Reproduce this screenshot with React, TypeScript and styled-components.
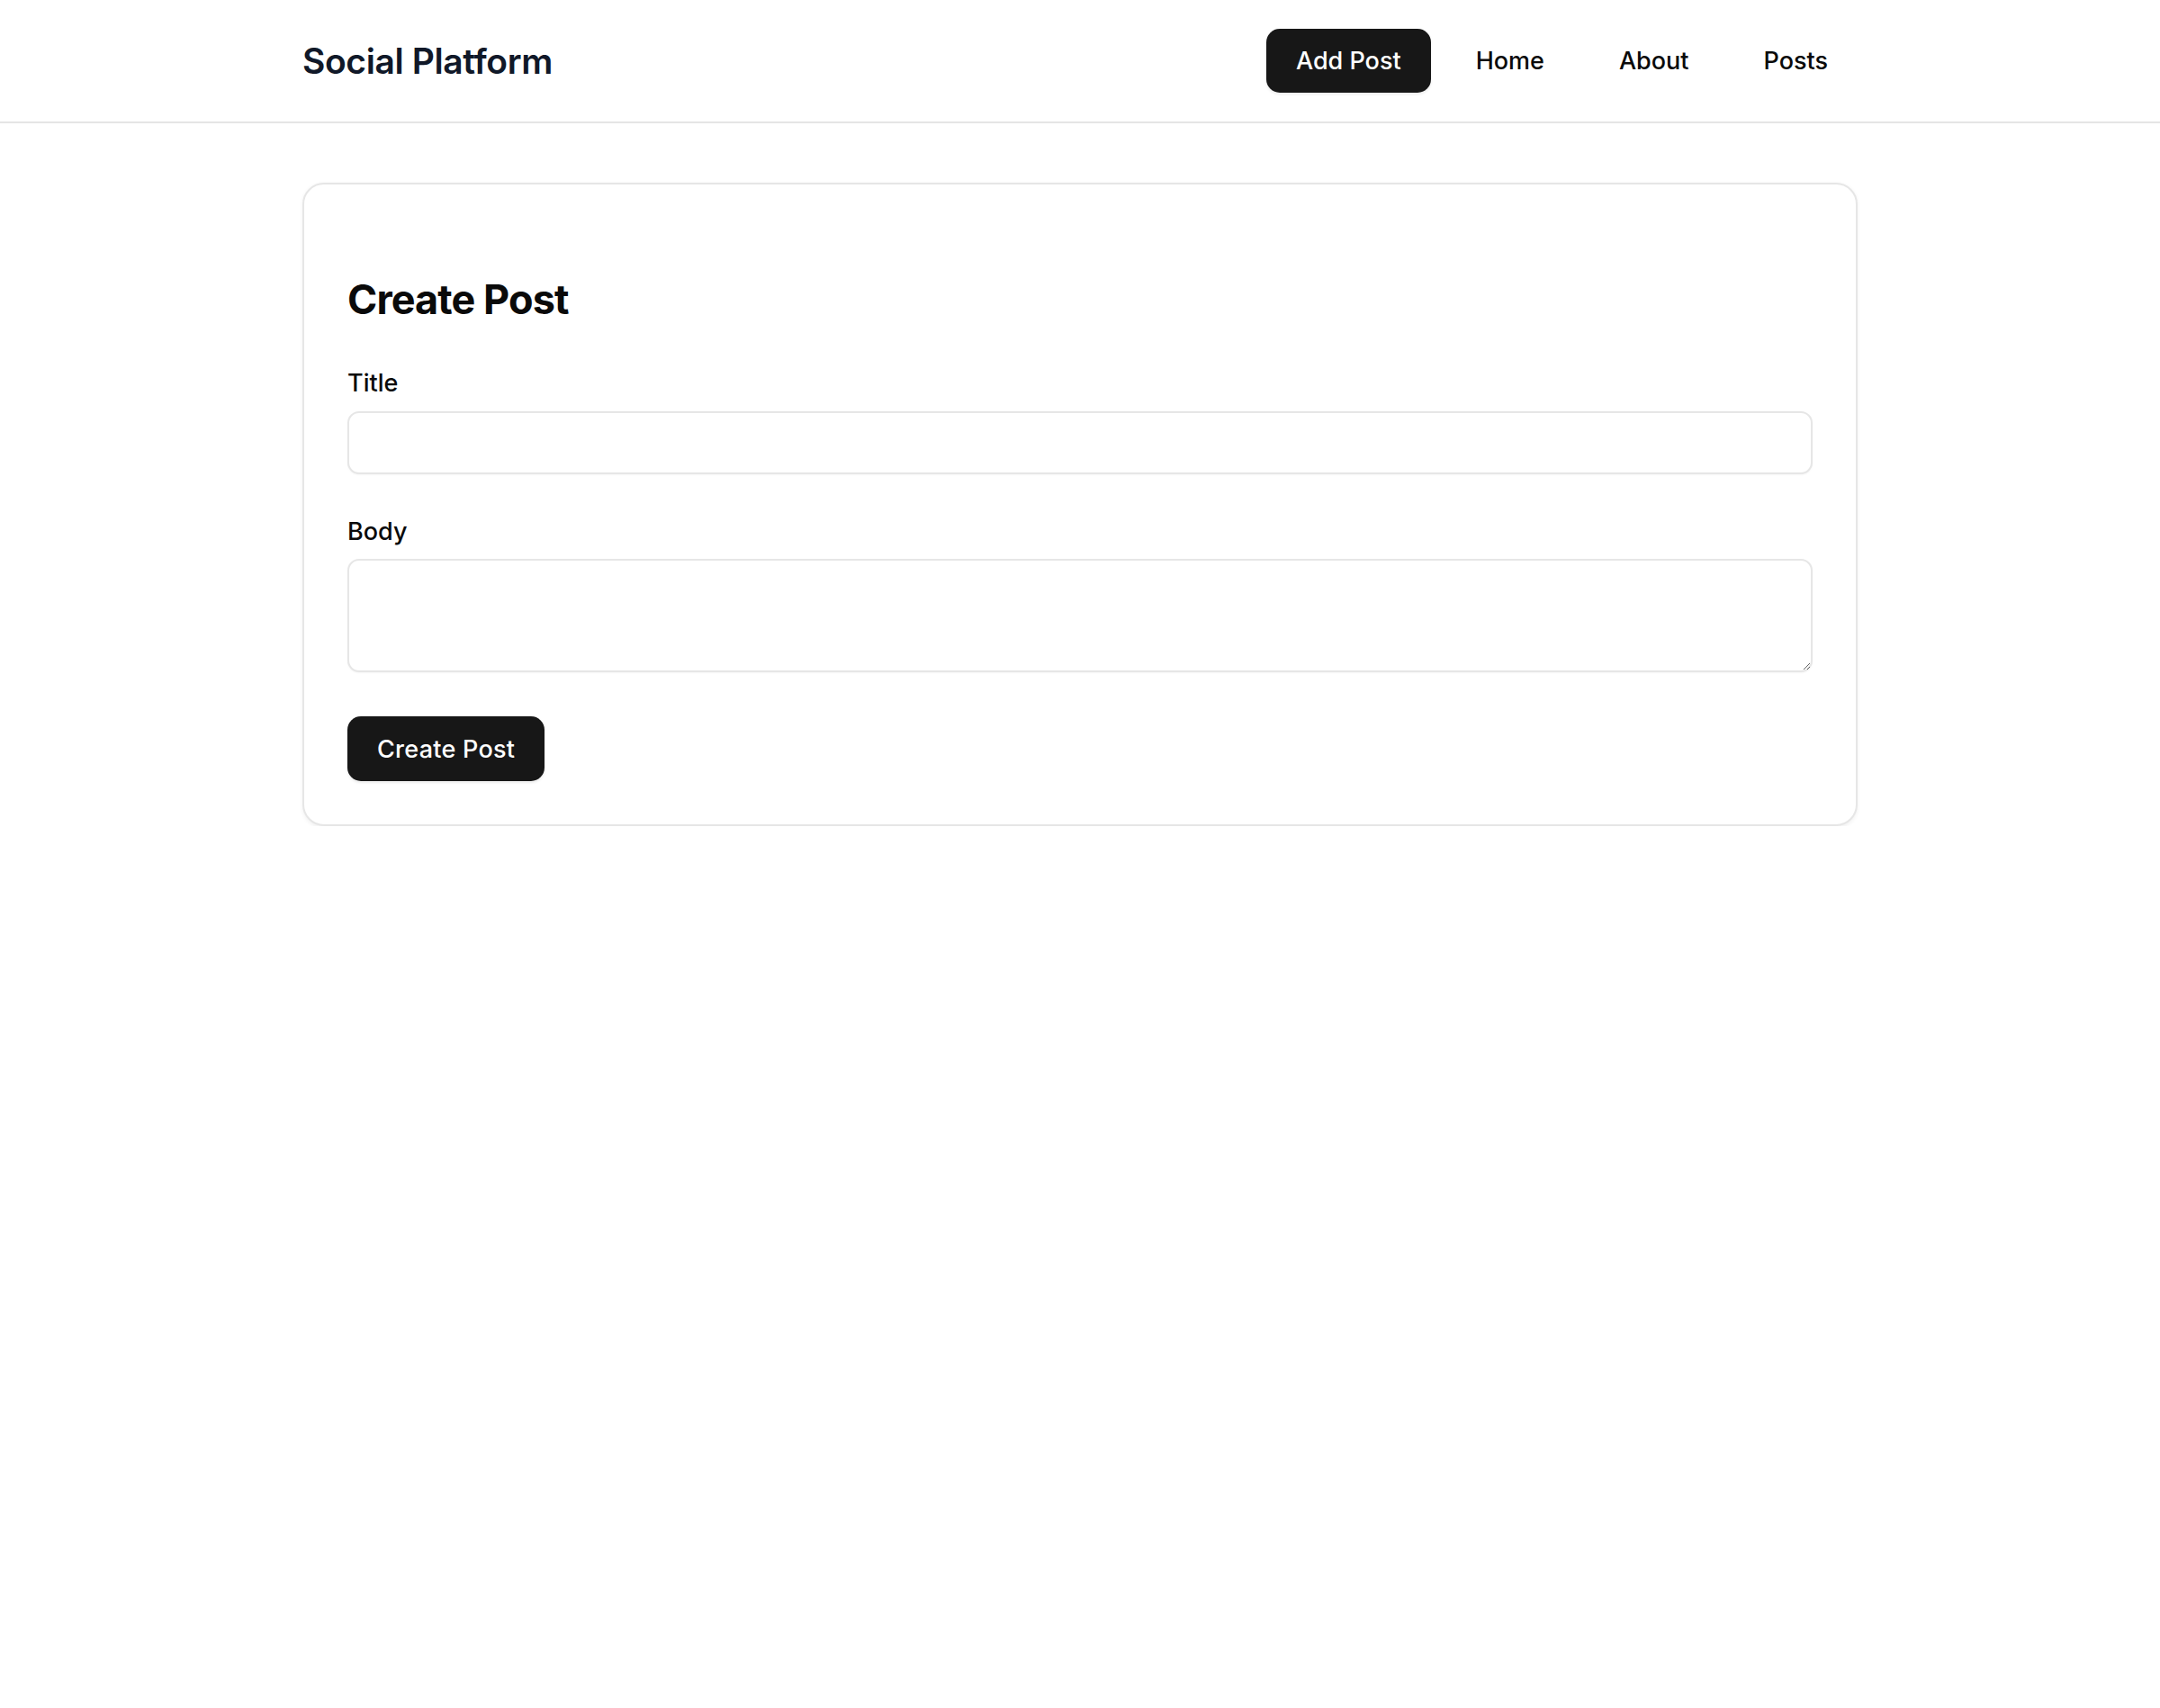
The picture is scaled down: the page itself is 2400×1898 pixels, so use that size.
import React from "react";
import styled, { createGlobalStyle } from "styled-components";

const GlobalStyle = createGlobalStyle`
  *, *::before, *::after { box-sizing: border-box; }
  html, body { margin: 0; padding: 0; background: #ffffff; }
  body {
    font-family: Inter, "Noto Sans", "Liberation Sans", sans-serif;
    color: #0a0a0a;
    -webkit-font-smoothing: antialiased;
  }
`;

const Header = styled.header`
  border-bottom: 2px solid #e5e5e5;
  background: #ffffff;
`;

const HeaderInner = styled.div`
  max-width: 1728px;
  margin: 0 auto;
  height: 135px;
  display: flex;
  align-items: center;
  justify-content: space-between;
`;

const Logo = styled.a`
  font-size: 39px;
  font-weight: 600;
  color: #101828;
  text-decoration: none;
  letter-spacing: -0.01em;
`;

const Nav = styled.nav`
  display: flex;
  align-items: center;
  gap: 17px;
`;

const NavLink = styled.a<{ $active?: boolean }>`
  display: inline-flex;
  align-items: center;
  height: 71px;
  padding: 0 33px;
  border-radius: 15px;
  font-size: 27px;
  font-weight: 500;
  text-decoration: none;
  color: ${(p) => (p.$active ? "#ffffff" : "#0a0a0a")};
  background: ${(p) => (p.$active ? "#171717" : "transparent")};
  box-shadow: ${(p) => (p.$active ? "0 1.5px 3px rgba(0,0,0,0.08)" : "none")};
`;

const Main = styled.main`
  max-width: 1728px;
  margin: 0 auto;
  padding-top: 66px;
`;

const Card = styled.section`
  border: 2px solid #e6e6e6;
  border-radius: 24px;
  padding: 101px 48px 48px;
  background: #ffffff;
  box-shadow: 0 1.5px 4px rgba(0, 0, 0, 0.06);
`;

const Title = styled.h2`
  margin: 0 0 46px;
  font-size: 45px;
  line-height: 54px;
  font-weight: 700;
  letter-spacing: -0.02em;
  color: #0a0a0a;
`;

const Form = styled.form`
  display: flex;
  flex-direction: column;
  gap: 44px;
`;

const Field = styled.div`
  display: flex;
  flex-direction: column;
`;

const Label = styled.label`
  font-size: 27px;
  line-height: 40.5px;
  font-weight: 500;
  color: #0a0a0a;
  margin-bottom: 10px;
`;

const TextInput = styled.input`
  width: 100%;
  height: 70px;
  border: 2px solid #e6e6e6;
  border-radius: 13px;
  padding: 0 18px;
  font-family: inherit;
  font-size: 24px;
  background: #ffffff;
  box-shadow: 0 1px 2px rgba(0, 0, 0, 0.04);
  outline: none;
`;

const TextArea = styled.textarea`
  width: 100%;
  height: 126px;
  border: 2px solid #e6e6e6;
  border-radius: 13px;
  padding: 12px 18px;
  font-family: inherit;
  font-size: 24px;
  background: #ffffff;
  box-shadow: 0 1px 2px rgba(0, 0, 0, 0.04);
  outline: none;
  display: block;
`;

const SubmitButton = styled.button`
  align-self: flex-start;
  margin-top: 5px;
  height: 72px;
  padding: 0 33px;
  border: none;
  border-radius: 15px;
  background: #171717;
  color: #ffffff;
  font-family: inherit;
  font-size: 27px;
  font-weight: 500;
  letter-spacing: 0.01em;
  cursor: pointer;
  box-shadow: 0 1.5px 3px rgba(0, 0, 0, 0.08);
`;

export default function App() {
  return (
    <>
      <GlobalStyle />
      <Header>
        <HeaderInner>
          <Logo href="#">Social Platform</Logo>
          <Nav>
            <NavLink href="#" $active>
              Add Post
            </NavLink>
            <NavLink href="#">Home</NavLink>
            <NavLink href="#">About</NavLink>
            <NavLink href="#">Posts</NavLink>
          </Nav>
        </HeaderInner>
      </Header>
      <Main>
        <Card>
          <Title>Create Post</Title>
          <Form onSubmit={(e) => e.preventDefault()}>
            <Field>
              <Label htmlFor="title">Title</Label>
              <TextInput id="title" type="text" />
            </Field>
            <Field>
              <Label htmlFor="body">Body</Label>
              <TextArea id="body" />
            </Field>
            <SubmitButton type="submit">Create Post</SubmitButton>
          </Form>
        </Card>
      </Main>
    </>
  );
}
